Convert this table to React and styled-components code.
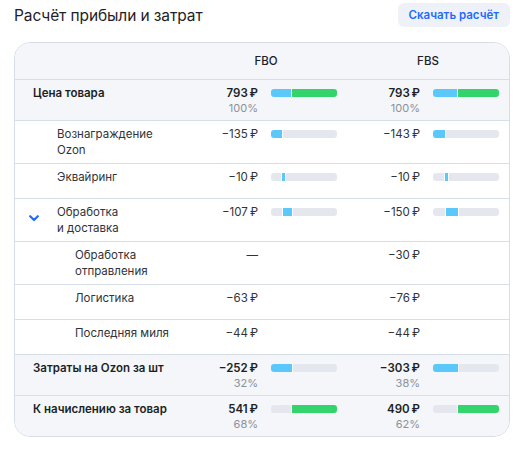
import React from "react";
import styled, { createGlobalStyle } from "styled-components";

const GlobalStyle = createGlobalStyle`
  body {
    margin: 0;
    background: #fff;
    font-family: Inter, "Noto Sans", "Liberation Sans", sans-serif;
    color: #1d2025;
  }
`;

const COLORS = {
  blue: "#5ac8fa",
  green: "#33d46b",
};

const Page = styled.div`
  padding: 3px 16px 0 14px;
`;

const TopBar = styled.div`
  display: flex;
  justify-content: space-between;
  align-items: center;
`;

const Title = styled.h2`
  margin: 0;
  font-size: 15.5px;
  font-weight: 400;
  color: #1f2226;
  letter-spacing: -0.1px;
`;

const DownloadButton = styled.button`
  height: 24px;
  padding: 0 11px;
  border: 0;
  border-radius: 6px;
  background: #eef2f8;
  color: #1f6bff;
  font-family: inherit;
  font-size: 11.5px;
  font-weight: 600;
  cursor: pointer;
`;

const Card = styled.div`
  margin-top: 15px;
  border: 1px solid #d6dee8;
  border-radius: 16px;
  overflow: hidden;
`;

const HeadRow = styled.div`
  display: flex;
  align-items: center;
  height: 36px;
  background: #f4f6f9;
  padding-left: 160px;
`;

const HeadCell = styled.div`
  width: 162px;
  padding-left: 20px;
  box-sizing: border-box;
  text-align: center;
  font-size: 11.5px;
  font-weight: 500;
`;

const Row = styled.div`
  display: flex;
  align-items: flex-start;
  min-height: 35px;
  box-sizing: border-box;
  padding: 5px 10px 5px 0;
  border-top: 1px solid #d6dee8;
  background: ${(p) => (p.$shaded ? "#f4f6f9" : "#fff")};
`;

const Label = styled.div`
  display: flex;
  width: 160px;
  flex-shrink: 0;
  box-sizing: border-box;
  padding-left: ${(p) => p.$indent}px;
  font-size: 11.5px;
  line-height: 16px;
  font-weight: ${(p) => (p.$strong ? 600 : 400)};
  color: ${(p) => (p.$strong ? "#1b1f24" : "#30343a")};
  white-space: pre-line;
`;

const ChevronSlot = styled.span`
  width: 28px;
  flex-shrink: 0;
  padding-top: 11px;
  line-height: 0;
`;

const Cell = styled.div`
  display: flex;
  width: 162px;
  flex-shrink: 0;
`;

const ValueBox = styled.div`
  width: 83px;
  flex-shrink: 0;
  text-align: right;
`;

const Value = styled.div`
  font-size: 11.5px;
  line-height: 16px;
  font-weight: ${(p) => (p.$strong ? 600 : 400)};
  color: ${(p) => (p.$strong ? "#1b1f24" : "#30343a")};
`;

const Percent = styled.div`
  font-size: 11px;
  line-height: 14px;
  color: #8b929b;
`;

const Track = styled.div`
  display: flex;
  width: 66px;
  height: 8px;
  margin: 4px 0 0 13px;
  border-radius: 3px;
  background: #e4e8ee;
  overflow: hidden;
`;

const Segment = styled.div`
  height: 100%;
  flex-shrink: 0;
  min-width: ${(p) => (p.$color ? 3 : 0)}px;
  background: ${(p) => (p.$color ? COLORS[p.$color] : "transparent")};
  box-shadow: ${(p) => (p.$color ? "0 0 0 1px #fff" : "none")};
`;

const Chevron = () => (
  <svg width="10" height="7" viewBox="0 0 10 7">
    <polyline
      points="1.2,1.2 5,5 8.8,1.2"
      fill="none"
      stroke="#1f6bff"
      strokeWidth="2.2"
      strokeLinecap="round"
      strokeLinejoin="round"
    />
  </svg>
);

const pct = (n) => (n / 793) * 100;

// bar = list of [width %, colour|null]
const rows = [
  {
    label: "Цена товара",
    level: 0,
    strong: true,
    shaded: true,
    fbo: { v: "793\u202F₽", p: "100%", bar: [[pct(252), "blue"], [pct(541), "green"]] },
    fbs: { v: "793\u202F₽", p: "100%", bar: [[pct(303), "blue"], [pct(490), "green"]] },
  },
  {
    label: "Вознаграждение\nOzon",
    level: 1,
    fbo: { v: "−135\u202F₽", bar: [[pct(135), "blue"]] },
    fbs: { v: "−143\u202F₽", bar: [[pct(143), "blue"]] },
  },
  {
    label: "Эквайринг",
    level: 1,
    fbo: { v: "−10\u202F₽", bar: [[pct(135), null], [pct(10), "blue"]] },
    fbs: { v: "−10\u202F₽", bar: [[pct(143), null], [pct(10), "blue"]] },
  },
  {
    label: "Обработка\nи доставка",
    level: 1,
    open: true,
    fbo: { v: "−107\u202F₽", bar: [[pct(145), null], [pct(107), "blue"]] },
    fbs: { v: "−150\u202F₽", bar: [[pct(153), null], [pct(150), "blue"]] },
  },
  {
    label: "Обработка\nотправления",
    level: 2,
    fbo: { v: "—" },
    fbs: { v: "−30\u202F₽" },
  },
  {
    label: "Логистика",
    level: 2,
    fbo: { v: "−63\u202F₽" },
    fbs: { v: "−76\u202F₽" },
  },
  {
    label: "Последняя миля",
    level: 2,
    fbo: { v: "−44\u202F₽" },
    fbs: { v: "−44\u202F₽" },
  },
  {
    label: "Затраты на Ozon за шт",
    level: 0,
    strong: true,
    shaded: true,
    fbo: { v: "−252\u202F₽", p: "32%", bar: [[pct(252), "blue"]] },
    fbs: { v: "−303\u202F₽", p: "38%", bar: [[pct(303), "blue"]] },
  },
  {
    label: "К начислению за товар",
    level: 0,
    strong: true,
    shaded: true,
    fbo: { v: "541\u202F₽", p: "68%", bar: [[pct(252), null], [pct(541), "green"]] },
    fbs: { v: "490\u202F₽", p: "62%", bar: [[pct(303), null], [pct(490), "green"]] },
  },
];

const indentFor = (level) => (level === 0 ? 18 : level === 1 ? 14 : 60);

const DataCell = ({ data, strong }) => (
  <Cell>
    <ValueBox>
      <Value $strong={strong}>{data.v}</Value>
      {data.p && <Percent>{data.p}</Percent>}
    </ValueBox>
    {data.bar && (
      <Track>
        {data.bar.map(([w, color], i) => (
          <Segment key={i} $color={color} style={{ width: `${w}%` }} />
        ))}
      </Track>
    )}
  </Cell>
);

const App = () => {
  return (
    <Page>
      <GlobalStyle />
      <TopBar>
        <Title>Расчёт прибыли и затрат</Title>
        <DownloadButton>Скачать расчёт</DownloadButton>
      </TopBar>
      <Card>
        <HeadRow>
          <HeadCell>FBO</HeadCell>
          <HeadCell>FBS</HeadCell>
        </HeadRow>
        {rows.map((row) => (
          <Row key={row.label} $shaded={row.shaded}>
            <Label $indent={indentFor(row.level)} $strong={row.strong}>
              {row.level === 1 && (
                <ChevronSlot>{row.open && <Chevron />}</ChevronSlot>
              )}
              <span>{row.label}</span>
            </Label>
            <DataCell data={row.fbo} strong={row.strong} />
            <DataCell data={row.fbs} strong={row.strong} />
          </Row>
        ))}
      </Card>
    </Page>
  );
};

export default App;
